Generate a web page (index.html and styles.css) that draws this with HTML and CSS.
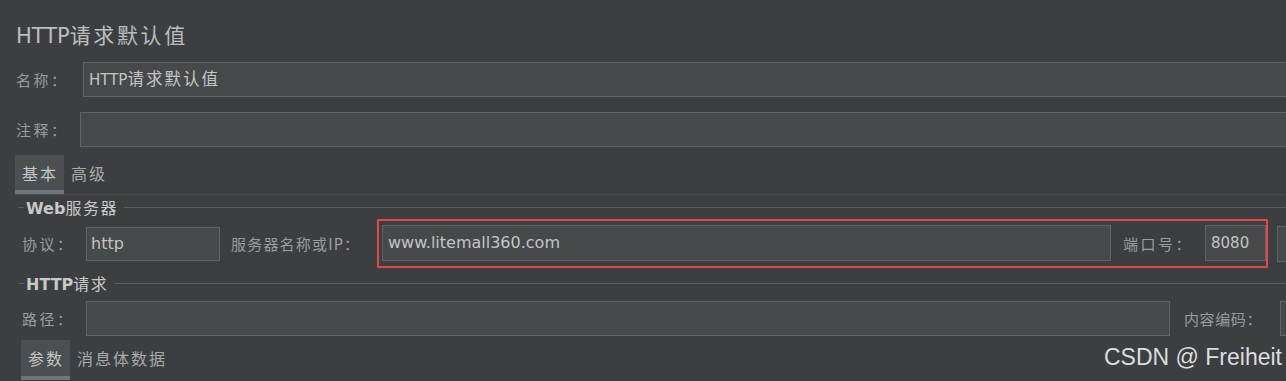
FILE: index.html
```html
<!DOCTYPE html>
<html lang="zh-CN">
<head>
  <meta charset="UTF-8" />
  <meta name="viewport" content="width=device-width, initial-scale=1.0" />
  <title>HTTP请求默认值</title>
  <link rel="stylesheet" href="styles.css">
</head>
<body>
  <div class="panel">
    <h1 class="title">HTTP<span class="cjk">请求默认值</span></h1>

    <div class="row row-name">
      <span class="lbl lbl-name">名称：</span>
      <div class="field field-grow">HTTP<span class="cjk">请求默认值</span></div>
    </div>

    <div class="row row-comment">
      <span class="lbl lbl-comment">注释：</span>
      <div class="field field-grow"></div>
    </div>

    <div class="tabs tabs-main">
      <span class="tab active">基本</span>
      <span class="tab">高级</span>
    </div>

    <div class="group">
      <div class="legend"><span class="tick"></span><span class="legend-text">Web<span class="cjk">服务器</span></span><span class="rule"></span></div>
      <div class="row row-server">
        <span class="lbl lbl-short">协议：</span>
        <div class="field field-proto">http</div>
        <span class="lbl lbl-host">服务器名称或IP：</span>
        <div class="highlight">
          <div class="field field-host">www.litemall360.com</div>
          <span class="lbl lbl-port">端口号：</span>
          <div class="field field-port">8080</div>
        </div>
        <div class="field field-grow field-rest"></div>
      </div>
    </div>

    <div class="group">
      <div class="legend legend-http"><span class="tick"></span><span class="legend-text">HTTP<span class="cjk">请求</span></span><span class="rule"></span></div>
      <div class="row row-path">
        <span class="lbl lbl-short">路径：</span>
        <div class="field field-grow"></div>
        <span class="lbl lbl-enc">内容编码：</span>
        <div class="field field-enc"></div>
      </div>
      <div class="tabs tabs-sub">
        <span class="tab active">参数</span>
        <span class="tab">消息体数据</span>
      </div>
    </div>
  </div>

  <div class="watermark">CSDN @ Freiheit</div>
</body>
</html>
```

FILE: styles.css
```css
html, body {
  margin: 0;
  padding: 0;
  height: 100%;
  overflow: hidden;
}

body {
  background: #3c3f41;
  color: #bbbbbb;
  font-family: "DejaVu Sans", "Noto Sans CJK SC", sans-serif;
  font-size: 15px;
  position: relative;
}

.panel {
  width: 1310px;
  padding-left: 16px;
  box-sizing: border-box;
}

.cjk {
  letter-spacing: 1.5px;
}

/* 标题 */
.title {
  margin: 22px 0 0;
  height: 28px;
  line-height: 28px;
  font-size: 21px;
  font-weight: normal;
  color: #bdbdbd;
}

.title .cjk {
  letter-spacing: 2.6px;
}

/* 行 */
.row {
  display: flex;
  align-items: center;
}

.row-name {
  margin-top: 12px;
}

.row-comment {
  margin-top: 15px;
}

.lbl {
  flex: none;
  color: #9b9b9b;
  font-size: 15px;
  letter-spacing: 2.5px;
  white-space: nowrap;
}

.lbl-name { width: 67px; }
.lbl-comment { width: 64px; }
.lbl-short { width: 64px; }
.lbl-host { width: 146px; margin-left: 11px; letter-spacing: 1.2px; }
.lbl-port { width: 82px; margin-left: 12px; }
.lbl-enc { width: 96px; margin-left: 14px; letter-spacing: 0.6px; }

/* 输入框 */
.field {
  flex: none;
  height: 35px;
  box-sizing: border-box;
  background: #45494a;
  border: 1px solid #646464;
  padding-left: 5px;
  line-height: 33px;
  color: #c4c4c4;
  font-size: 16px;
  white-space: nowrap;
  overflow: hidden;
}

.field-grow {
  flex: 1;
}

.row-name .field {
  font-size: 15px;
}

.row-name .field .cjk {
  font-size: 16.5px;
  letter-spacing: 2px;
}

.field-proto {
  width: 134px;
  height: 34px;
  line-height: 32px;
  padding-left: 4px;
}

.field-host {
  width: 729px;
  height: 36px;
  line-height: 34px;
}

.field-port {
  width: 61px;
  height: 36px;
  line-height: 34px;
  font-size: 15px;
}

.field-rest {
  margin-left: 9px;
  height: 36px;
}

.field-enc {
  width: 30px;
}

/* 红框标注 */
.highlight {
  flex: none;
  display: flex;
  align-items: center;
  border: 2px solid #e5464c;
  border-radius: 1px;
  padding: 4px 0 5px 3px;
}

/* 选项卡 */
.tabs {
  display: flex;
  align-items: stretch;
  border-bottom: 1px solid #47494b;
}

.tabs-main {
  margin-top: 8px;
  margin-left: -1px;
  height: 39px;
}

.tab {
  display: flex;
  align-items: center;
  padding: 0 6px 4px 7px;
  font-size: 16px;
  letter-spacing: 2px;
  color: #a9a9a9;
}

.tab.active {
  background: #4b4f51;
  color: #c6c6c6;
  box-shadow: inset 0 -4px 0 #6f7478;
}

/* 分组 */
.group {
  margin-left: 2px;
}

.legend {
  display: flex;
  align-items: center;
  height: 24px;
}

.legend-http {
  margin-top: 4px;
  height: 22px;
}

.tick {
  width: 6px;
  height: 1px;
  background: #5a5d60;
}

.legend-text {
  margin: 0 6px 0 2px;
  font-size: 16px;
  color: #c8c8c8;
  font-weight: bold;
}

.legend-text .cjk {
  font-weight: normal;
}

.rule {
  flex: 1;
  height: 1px;
  background: #5a5d60;
}

.group .row,
.group .tabs {
  padding-left: 4px;
}

.row-path {
  margin-top: 7px;
}

.tabs-sub {
  margin-top: 4px;
  height: 40px;
  border-bottom: none;
  padding-left: 3px !important;
}

/* 水印 */
.watermark {
  position: absolute;
  right: 4px;
  top: 344px;
  font-family: "Liberation Sans", Arial, sans-serif;
  font-size: 23px;
  color: #dcdcdc;
}
```
